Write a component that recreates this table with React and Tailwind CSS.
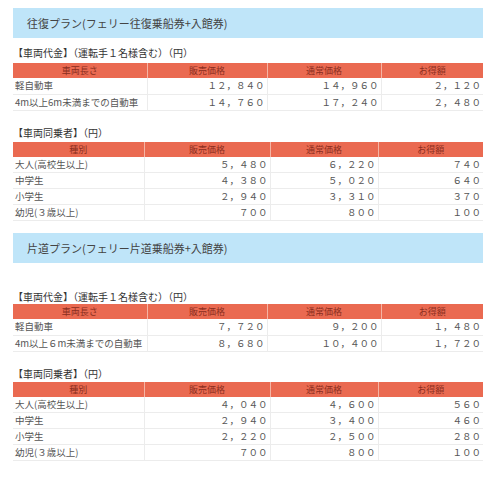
import React from 'react';

const carCols = [134, 120, 114, 102];
const paxCols = [131, 126, 108, 105];

function PlanTitle({ children, className }) {
  return (
    <div className={`h-[30px] bg-[#bfe5f9] pl-[14px] flex items-center text-[11px] text-[#444] ${className}`}>
      {children}
    </div>
  );
}

function Label({ children, className }) {
  return (
    <div className={`text-[10px] leading-[14px] text-[#333] ${className}`}>
      {children}
    </div>
  );
}

function PriceTable({ cols, head, rows }) {
  return (
    <table className="table-fixed border-collapse w-[470px]">
      <colgroup>
        {cols.map((w, i) => (
          <col key={i} style={{ width: w }} />
        ))}
      </colgroup>
      <thead>
        <tr className="h-[15px] bg-[#ea6a51]">
          {head.map((h, i) => (
            <th
              key={i}
              className={`p-0 font-normal text-[9px] leading-[15px] text-[#8a2e20] text-center ${i > 0 ? 'border-l border-[#f5b4a4]' : ''}`}
            >
              {h}
            </th>
          ))}
        </tr>
      </thead>
      <tbody>
        {rows.map((r, ri) => (
          <tr key={ri} className="h-[16px] border-b border-[#ececec]">
            {r.map((c, ci) => (
              <td
                key={ci}
                className={`p-0 text-[9.5px] leading-[15px] text-[#555] ${ci === 0 ? 'text-left pl-[2px]' : 'text-right pr-[2px] border-l border-[#ececec]'}`}
              >
                {c}
              </td>
            ))}
          </tr>
        ))}
      </tbody>
    </table>
  );
}

export default function App() {
  return (
    <div
      className="w-[500px] h-[478px] bg-white pt-[8px] pl-[13px]"
      style={{ fontFamily: '"Noto Sans CJK JP", "Noto Sans", sans-serif' }}
    >
      <div className="w-[470px]">
        <PlanTitle>往復プラン(フェリー往復乗船券+入館券)</PlanTitle>

        <Label className="mt-[8px] mb-[3px]">【車両代金】（運転手１名様含む）（円）</Label>
        <PriceTable
          cols={carCols}
          head={['車両長さ', '販売価格', '通常価格', 'お得額']}
          rows={[
            ['軽自動車', '１２，８４０', '１４，９６０', '２，１２０'],
            ['4m以上6m未満までの自動車', '１４，７６０', '１７，２４０', '２，４８０'],
          ]}
        />

        <Label className="mt-[15px] mb-[2px]">【車両同乗者】（円）</Label>
        <PriceTable
          cols={paxCols}
          head={['種別', '販売価格', '通常価格', 'お得額']}
          rows={[
            ['大人(高校生以上)', '５，４８０', '６，２２０', '７４０'],
            ['中学生', '４，３８０', '５，０２０', '６４０'],
            ['小学生', '２，９４０', '３，３１０', '３７０'],
            ['幼児(３歳以上)', '７００', '８００', '１００'],
          ]}
        />

        <PlanTitle className="mt-[12px]">片道プラン(フェリー片道乗船券+入館券)</PlanTitle>

        <Label className="mt-[27px] mb-[0px]">【車両代金】（運転手１名様含む）（円）</Label>
        <PriceTable
          cols={carCols}
          head={['車両長さ', '販売価格', '通常価格', 'お得額']}
          rows={[
            ['軽自動車', '７，７２０', '９，２００', '１，４８０'],
            ['4m以上６m未満までの自動車', '８，６８０', '１０，４００', '１，７２０'],
          ]}
        />

        <Label className="mt-[15px] mb-[1px]">【車両同乗者】（円）</Label>
        <PriceTable
          cols={paxCols}
          head={['種別', '販売価格', '通常価格', 'お得額']}
          rows={[
            ['大人(高校生以上)', '４，０４０', '４，６００', '５６０'],
            ['中学生', '２，９４０', '３，４００', '４６０'],
            ['小学生', '２，２２０', '２，５００', '２８０'],
            ['幼児(３歳以上)', '７００', '８００', '１００'],
          ]}
        />
      </div>
    </div>
  );
}
